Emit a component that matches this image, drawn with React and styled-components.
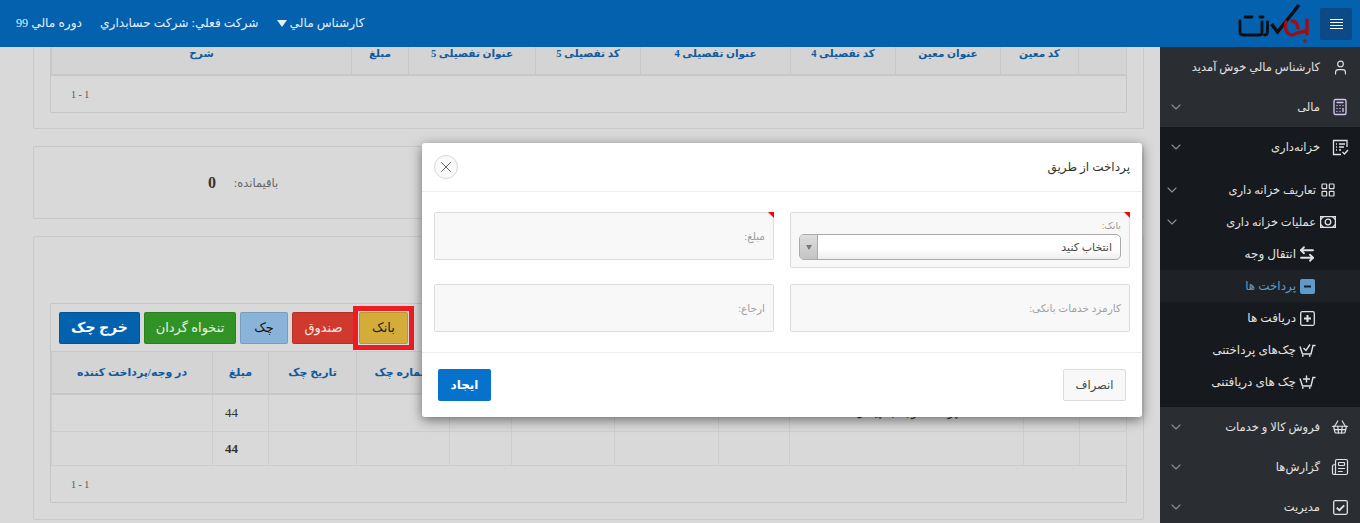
import styled, { createGlobalStyle } from "styled-components";
import {
  User,
  Calculator,
  ChevronDown,
  LayoutGrid,
  ArrowLeftRight,
  ShoppingBasket,
  Newspaper,
  X,
} from "lucide-react";

const GlobalStyle = createGlobalStyle`
  html, body {
    margin: 0;
    height: 100%;
    overflow: hidden;
  }
  body {
    background: #d9d9d9;
    font-family: "Liberation Serif", "DejaVu Sans", serif;
    font-size: 12px;
  }
  * {
    box-sizing: border-box;
  }
`;

function Logo() {
  return (
    <svg width="74" height="44" viewBox="0 0 74 44" fill="none">
      <g stroke="#0c0f14" strokeWidth="2.8" strokeLinecap="round" strokeLinejoin="round">
        <path d="M4 19v11q0 3 3 3h17q2 0 2-3V20" />
        <path d="M31.5 20v10q0 3-3 3" />
        <path d="M9 15h7M24 15h3" />
      </g>
      <path d="M35.5 22l6 8L63 3" stroke="#0c0f14" strokeWidth="3.4" strokeLinejoin="miter" />
      <g stroke="#a30d12" strokeWidth="3.4" strokeLinecap="round">
        <path d="M50 20q-2 9 3 12q4 2 8-1l9-2" />
        <path d="M56 19q5 0 6 7" />
        <path d="M71 18v14" />
      </g>
      <circle cx="69" cy="39" r="1.7" fill="#a30d12" />
    </svg>
  );
}

function ReportIcon() {
  return (
    <svg width="17" height="17" viewBox="0 0 17 17" fill="none" stroke="currentColor" strokeWidth="1.3">
      <path d="M15 8V1.5H1.5v14H9" />
      <path d="M4 5h1M7 5h6M4 8h1M7 8h5M4 11h1M7 11h2M10.5 13l2 2 3.5-4" />
    </svg>
  );
}

function MoneyIcon() {
  return (
    <svg width="16" height="12" viewBox="0 0 16 12" fill="none" stroke="currentColor" strokeWidth="1.3">
      <rect x="0.6" y="0.6" width="14.8" height="10.8" />
      <circle cx="8" cy="6" r="2.8" />
      <path d="M0.6 3.5l3-2.9M12.4 0.6l3 2.9M0.6 8.5l3 2.9M15.4 8.5l-3 2.9" />
    </svg>
  );
}

function BoxIcon({ sign }) {
  return (
    <svg width="15" height="15" viewBox="0 0 15 15" fill="none" stroke="currentColor" strokeWidth="1.3">
      <rect x="0.7" y="0.7" width="13.6" height="13.6" rx="1.5" />
      <path d="M4 7.5h7" strokeWidth="2" />
      {sign === "plus" && <path d="M7.5 4v7" strokeWidth="2" />}
    </svg>
  );
}

function ActiveMinusIcon() {
  return (
    <svg width="15" height="15" viewBox="0 0 15 15">
      <rect width="15" height="15" rx="2" fill="#5d9bcf" />
      <path d="M4 7.5h7" stroke="#1b2127" strokeWidth="2" />
    </svg>
  );
}

function CartIcon({ mark }) {
  return (
    <svg width="17" height="15" viewBox="0 0 17 15" fill="none" stroke="currentColor" strokeWidth="1.4">
      <path d="M16.5 2.5h-2.5l-2 8.5H3.5L1 3.5" />
      <path d="M3 12.8h1.5M10 12.8h1.5" strokeWidth="1.8" />
      {mark === "check" && <path d="M4.5 5l2.5 2.5L11 1.5" />}
      {mark === "plus" && <path d="M7.5 0.5v7M4 4h7" />}
    </svg>
  );
}

function CheckBoxIcon() {
  return (
    <svg width="15" height="15" viewBox="0 0 15 15" fill="none" stroke="currentColor">
      <rect x="0.7" y="0.7" width="13.6" height="13.6" rx="1.5" strokeWidth="1.3" />
      <path d="M3.8 7.8l2.6 2.4 4.8-4.8" strokeWidth="1.9" />
    </svg>
  );
}

function MenuIcon() {
  return (
    <svg width="13" height="11" viewBox="0 0 13 11" stroke="#fff" strokeWidth="1">
      <path d="M0 1.5h13M0 4.5h13M0 7.5h13M0 10.5h13" />
    </svg>
  );
}

const topColumns = [
  { width: 48, title: "" },
  { width: 78, title: "کد معین" },
  { width: 105, title: "عنوان معین" },
  { width: 105, title: "کد تفصیلی 4" },
  { width: 150, title: "عنوان تفصیلی 4" },
  { width: 105, title: "کد تفصیلی 5" },
  { width: 127, title: "عنوان تفصیلی 5" },
  { width: 57, title: "مبلغ" },
  { width: 300, title: "شرح" },
];

const checkColumns = [
  { width: 47, title: "" },
  { width: 56, title: "" },
  { width: 234, title: "" },
  { width: 71, title: "" },
  { width: 104, title: "" },
  { width: 103, title: "" },
  { width: 62, title: "" },
  { width: 93, title: "شماره چک" },
  { width: 88, title: "تاریخ چک" },
  { width: 56, title: "مبلغ" },
  { width: 161, title: "در وجه/پرداخت کننده" },
];

const subItems = [
  { icon: <ArrowLeftRight size={18} strokeWidth={2.4} />, label: "انتقال وجه" },
  { icon: <ActiveMinusIcon />, label: "پرداخت ها", active: true },
  { icon: <BoxIcon sign="plus" />, label: "دریافت ها" },
  { icon: <CartIcon mark="check" />, label: "چک‌های پرداختنی" },
  { icon: <CartIcon mark="plus" />, label: "چک های دریافتنی" },
];

export default function App() {
  return (
    <>
      <GlobalStyle />
      <Page>
        <Header>
          <HeaderInfo>
            <span>دوره مالي 99</span>
            <span>شرکت فعلي: شرکت حسابداري</span>
            <UserMenu>
              <Caret />
              <span>کارشناس مالي</span>
            </UserMenu>
          </HeaderInfo>
          <Brand>
            <Logo />
            <MenuButton>
              <MenuIcon />
            </MenuButton>
          </Brand>
        </Header>

        <Body>
          <Main>
            <CutPanel>
              <Box $cut>
                <Table>
                  <colgroup>
                    {topColumns.map((col, index) => (
                      <col key={index} width={col.width} />
                    ))}
                  </colgroup>
                  <thead>
                    <tr>
                      {topColumns.map((col, index) => (
                        <ScrolledHeadCell key={index} $height={27}>
                          {col.title}
                        </ScrolledHeadCell>
                      ))}
                    </tr>
                  </thead>
                </Table>
                <Pager>1 - 1</Pager>
              </Box>
            </CutPanel>

            <RemainPanel>
              <RemainValue>0</RemainValue>
              <RemainLabel>باقیمانده:</RemainLabel>
            </RemainPanel>

            <TablePanel>
              <Box>
                <Toolbar>
                  <ToolButton $bg="#0461ae" $color="#fff" $bold>
                    خرج چک
                  </ToolButton>
                  <ToolButton $bg="#319325" $color="#e8f2e4" $width={92}>
                    تنخواه گردان
                  </ToolButton>
                  <ToolButton $bg="#8ab3d9" $color="#111" $width={48}>
                    چک
                  </ToolButton>
                  <ToolButton $bg="#d03a2e" $color="#f4e4e0" $width={63}>
                    صندوق
                  </ToolButton>
                  <MarkedSlot>
                    <ToolButton $bg="#d4ac3a" $color="#222" $width={49}>
                      بانک
                    </ToolButton>
                  </MarkedSlot>
                </Toolbar>
                <Table>
                  <colgroup>
                    {checkColumns.map((col, index) => (
                      <col key={index} width={col.width} />
                    ))}
                  </colgroup>
                  <thead>
                    <tr>
                      {checkColumns.map((col, index) => (
                        <HeadCell key={index} $height={42}>
                          {col.title}
                        </HeadCell>
                      ))}
                    </tr>
                  </thead>
                  <tbody>
                    <tr>
                      <Cell $height={38} />
                      <Cell />
                      <Cell>پرداخت وجه به پيمان</Cell>
                      <Cell />
                      <Cell />
                      <Cell />
                      <Cell />
                      <Cell />
                      <Cell />
                      <AmountCell>44</AmountCell>
                      <Cell />
                    </tr>
                    <tr>
                      <Cell $height={34} />
                      <Cell />
                      <Cell />
                      <Cell />
                      <Cell />
                      <Cell />
                      <Cell />
                      <Cell />
                      <Cell />
                      <AmountCell $bold>44</AmountCell>
                      <Cell />
                    </tr>
                  </tbody>
                </Table>
                <Pager>1 - 1</Pager>
              </Box>
            </TablePanel>

            <Modal>
              <ModalHeader>
                <ModalTitle>پرداخت از طریق</ModalTitle>
                <CloseButton>
                  <X size={18} strokeWidth={1.1} />
                </CloseButton>
              </ModalHeader>
              <ModalBody>
                <Field $required $tall>
                  <SmallLabel>بانک:</SmallLabel>
                  <Select>
                    <SelectValue>انتخاب کنید</SelectValue>
                    <SelectArrow />
                  </Select>
                </Field>
                <Field $required>
                  <FieldLabel>مبلغ:</FieldLabel>
                </Field>
                <Field>
                  <FieldLabel>کارمزد خدمات بانکی:</FieldLabel>
                </Field>
                <Field>
                  <FieldLabel>ارجاع:</FieldLabel>
                </Field>
              </ModalBody>
              <ModalFooter>
                <CancelButton>انصراف</CancelButton>
                <CreateButton>ایجاد</CreateButton>
              </ModalFooter>
            </Modal>
          </Main>

          <Sidebar>
            <NavRow>
              <NavIcon>
                <User size={17} strokeWidth={1.6} />
              </NavIcon>
              <NavLabel>کارشناس مالي خوش آمدید</NavLabel>
            </NavRow>
            <NavRow>
              <NavIcon>
                <Calculator size={18} strokeWidth={1.8} color="#d6c2f2" />
              </NavIcon>
              <NavLabel>مالی</NavLabel>
              <Chevron />
            </NavRow>

            <NavGroup>
              <NavRow>
                <NavIcon>
                  <ReportIcon />
                </NavIcon>
                <NavLabel>خزانه‌داری</NavLabel>
                <Chevron />
              </NavRow>
              <SubList>
                <SubRow>
                  <SubIcon>
                    <LayoutGrid size={16} strokeWidth={1.8} />
                  </SubIcon>
                  <NavLabel>تعاریف خزانه داری</NavLabel>
                  <SubChevron />
                </SubRow>
                <SubRow>
                  <SubIcon>
                    <MoneyIcon />
                  </SubIcon>
                  <NavLabel>عملیات خزانه داری</NavLabel>
                  <SubChevron />
                </SubRow>
                {subItems.map((item) => (
                  <LeafRow key={item.label} $active={item.active}>
                    <LeafIcon>{item.icon}</LeafIcon>
                    <LeafLabel>{item.label}</LeafLabel>
                  </LeafRow>
                ))}
              </SubList>
            </NavGroup>

            <NavRow>
              <NavIcon>
                <ShoppingBasket size={18} strokeWidth={1.6} />
              </NavIcon>
              <NavLabel>فروش کالا و خدمات</NavLabel>
              <Chevron />
            </NavRow>
            <NavRow>
              <NavIcon>
                <Newspaper size={18} strokeWidth={1.6} />
              </NavIcon>
              <NavLabel>گزارش‌ها</NavLabel>
              <Chevron />
            </NavRow>
            <NavRow>
              <NavIcon>
                <CheckBoxIcon />
              </NavIcon>
              <NavLabel>مدیریت</NavLabel>
              <Chevron />
            </NavRow>
          </Sidebar>
        </Body>
      </Page>
    </>
  );
}

const Page = styled.div`
  width: 1360px;
  height: 523px;
  display: flex;
  flex-direction: column;
  overflow: hidden;
`;

const Header = styled.header`
  height: 47px;
  flex: none;
  background: #0461ae;
  color: #e6eef6;
  display: flex;
  align-items: center;
  justify-content: space-between;
  padding: 0 8px 0 16px;
`;

const HeaderInfo = styled.div`
  display: flex;
  align-items: center;
  gap: 18px;
  font-size: 12.2px;
`;

const UserMenu = styled.div`
  display: flex;
  align-items: center;
  gap: 3px;
`;

const Caret = styled.i`
  width: 0;
  height: 0;
  border-left: 5px solid transparent;
  border-right: 5px solid transparent;
  border-top: 7px solid #e6eef6;
`;

const Brand = styled.div`
  display: flex;
  align-items: center;
  gap: 10px;
`;

const MenuButton = styled.button`
  width: 32px;
  height: 32px;
  border: 0;
  padding: 0;
  background: #0b4a85;
  border-radius: 2px;
  display: flex;
  align-items: center;
  justify-content: center;
`;

const Body = styled.div`
  flex: 1;
  display: flex;
  min-height: 0;
`;

const Main = styled.main`
  width: 1160px;
  position: relative;
  padding: 0 16px 0 33px;
  display: flex;
  flex-direction: column;
  gap: 17px;
`;

const Panel = styled.section`
  border: 1px solid #c9c9c9;
  border-radius: 2px;
`;

const CutPanel = styled(Panel)`
  border-top: 0;
  padding: 0 16px 15px;
`;

const RemainPanel = styled(Panel)`
  height: 73px;
  flex: none;
  display: flex;
  align-items: center;
  padding-left: 174px;
  gap: 18px;
`;

const RemainValue = styled.b`
  font-size: 16px;
  color: #333;
`;

const RemainLabel = styled.span`
  direction: rtl;
  font-size: 11.5px;
  color: #666;
`;

const TablePanel = styled(Panel)`
  padding: 66px 16px 16px;
`;

const Box = styled.div`
  border: 1px solid #c6c6c6;
  border-top-width: ${(p) => (p.$cut ? 0 : 1)}px;
  border-radius: 2px;
`;

const Toolbar = styled.div`
  height: 47px;
  display: flex;
  align-items: center;
  gap: 4px;
  padding-left: 8px;
`;

const ToolButton = styled.button`
  display: block;
  width: ${(p) => p.$width || 81}px;
  height: 32px;
  padding: 0;
  border: 1px solid rgba(0, 0, 0, 0.12);
  border-radius: 2px;
  background: ${(p) => p.$bg};
  color: ${(p) => p.$color};
  font: ${(p) => (p.$bold ? "700 14px" : "400 13px")} "Liberation Serif", "DejaVu Sans", serif;
`;

const MarkedSlot = styled.div`
  position: relative;
  margin: -6px;
  border: 5px solid #ed1c24;
  padding: 1px;
`;

const Table = styled.table`
  width: 100%;
  table-layout: fixed;
  border-collapse: collapse;
  direction: rtl;
`;

const HeadCell = styled.th`
  height: ${(p) => p.$height}px;
  padding: 0 4px;
  background: #d4d4d4;
  border: 1px solid #c8c8c8;
  border-bottom-width: 2px;
  color: #0f5ba0;
  font-size: 11px;
  font-weight: 700;
  white-space: nowrap;
  overflow: hidden;
`;

const ScrolledHeadCell = styled(HeadCell)`
  border-top: 0;
  padding-bottom: 15px;
  font-size: 10.5px;
`;

const Cell = styled.td`
  height: ${(p) => p.$height || 0}px;
  padding: 0 4px;
  border: 1px solid #cdcdcd;
  text-align: center;
  color: #333;
  font-size: 12px;
  white-space: nowrap;
`;

const AmountCell = styled(Cell)`
  text-align: right;
  padding-right: 30px;
  font-size: 13px;
  font-weight: ${(p) => (p.$bold ? 700 : 400)};
`;

const Pager = styled.div`
  height: 36px;
  display: flex;
  align-items: center;
  padding-left: 20px;
  font-size: 10px;
  color: #555;
`;

const Modal = styled.div`
  position: absolute;
  left: 422px;
  top: 96px;
  width: 720px;
  height: 274px;
  background: #fff;
  border-radius: 3px;
  box-shadow: 0 3px 12px rgba(0, 0, 0, 0.5);
  direction: rtl;
`;

const ModalHeader = styled.div`
  height: 49px;
  border-bottom: 1px solid #eeeeee;
  display: flex;
  align-items: center;
  justify-content: space-between;
  padding: 0 12px;
`;

const ModalTitle = styled.div`
  font-size: 12px;
  color: #333;
`;

const CloseButton = styled.button`
  width: 24px;
  height: 24px;
  padding: 0;
  border: 1px solid #d8d8d8;
  border-radius: 50%;
  background: #fafafa;
  color: #444;
  display: flex;
  align-items: center;
  justify-content: center;
`;

const ModalBody = styled.div`
  height: 161px;
  display: grid;
  grid-template-columns: 340px 340px;
  grid-template-rows: auto auto;
  column-gap: 16px;
  row-gap: 16px;
  align-content: start;
  align-items: start;
  padding: 20px 12px 0;
  border-bottom: 1px solid #eeeeee;
`;

const Field = styled.div`
  position: relative;
  height: ${(p) => (p.$tall ? 56 : 48)}px;
  background: #f8f8f8;
  border: 1px solid #dddddd;
  border-radius: 2px;
  padding: ${(p) => (p.$tall ? "5px 8px 0" : "0 8px")};
  display: ${(p) => (p.$tall ? "block" : "flex")};
  align-items: center;

  &::after {
    content: "";
    display: ${(p) => (p.$required ? "block" : "none")};
    position: absolute;
    top: -1px;
    right: -1px;
    border-top: 6px solid #f00;
    border-left: 6px solid transparent;
  }
`;

const SmallLabel = styled.div`
  font-size: 9.5px;
  color: #999;
  line-height: 16px;
`;

const FieldLabel = styled.span`
  font-size: 10.5px;
  color: #a0a0a0;
`;

const Select = styled.div`
  height: 26px;
  border: 1px solid #aaaaaa;
  border-radius: 5px;
  background: linear-gradient(#ffffff 60%, #eeeeee);
  display: flex;
  align-items: stretch;
  overflow: hidden;
`;

const SelectValue = styled.div`
  flex: 1;
  padding: 0 8px;
  line-height: 24px;
  font-size: 11px;
  color: #444;
`;

const SelectArrow = styled.div`
  width: 18px;
  border-right: 1px solid #aaaaaa;
  background: linear-gradient(#dddddd, #c4c4c4);
  display: flex;
  align-items: center;
  justify-content: center;

  &::before {
    content: "";
    border-left: 3px solid transparent;
    border-right: 3px solid transparent;
    border-top: 5px solid #777;
  }
`;

const ModalFooter = styled.div`
  height: 64px;
  display: flex;
  align-items: center;
  justify-content: space-between;
  padding: 0 16px;
`;

const CancelButton = styled.button`
  width: 63px;
  height: 32px;
  padding: 0;
  border: 1px solid #dcdcdc;
  border-radius: 2px;
  background: #f8f8f8;
  color: #444;
  font: 400 11.5px "Liberation Serif", "DejaVu Sans", serif;
`;

const CreateButton = styled.button`
  width: 53px;
  height: 32px;
  padding: 0;
  border: 0;
  border-radius: 2px;
  background: #0672cb;
  color: #fff;
  font: 700 12px "Liberation Serif", "DejaVu Sans", serif;
`;

const Sidebar = styled.nav`
  width: 200px;
  flex: none;
  background: #2a2e33;
  color: #e2e2e2;
  direction: rtl;
`;

const NavRow = styled.div`
  height: 40px;
  display: flex;
  align-items: center;
  padding: 0 11px 0 8px;
`;

const NavIcon = styled.span`
  width: 18px;
  display: flex;
  justify-content: center;
  margin-left: 11px;
  flex: none;
`;

const NavLabel = styled.span`
  font-size: 11.5px;
  white-space: nowrap;
`;

const LeafLabel = styled(NavLabel)`
  font-size: 12px;
`;

const Chevron = styled(ChevronDown).attrs({ size: 16, strokeWidth: 1.6 })`
  margin-right: auto;
  color: #8b8f94;
`;

const NavGroup = styled.div`
  background: #16191d;
  height: 280px;
`;

const SubList = styled.div`
  padding-top: 7px;
`;

const SubRow = styled.div`
  height: 32px;
  display: flex;
  align-items: center;
  padding: 0 24px 0 4px;
`;

const SubIcon = styled.span`
  width: 16px;
  display: flex;
  justify-content: center;
  margin-left: 4px;
  flex: none;
`;

const SubChevron = styled(Chevron)`
  margin-right: auto;
`;

const LeafRow = styled.div`
  height: 32px;
  display: flex;
  align-items: center;
  padding-right: 44px;
  background: ${(p) => (p.$active ? "#1e2227" : "transparent")};
  color: ${(p) => (p.$active ? "#5d9bcf" : "inherit")};
`;

const LeafIcon = styled.span`
  width: 18px;
  display: flex;
  justify-content: center;
  margin-left: 2px;
  color: #e2e2e2;
  flex: none;
`;
